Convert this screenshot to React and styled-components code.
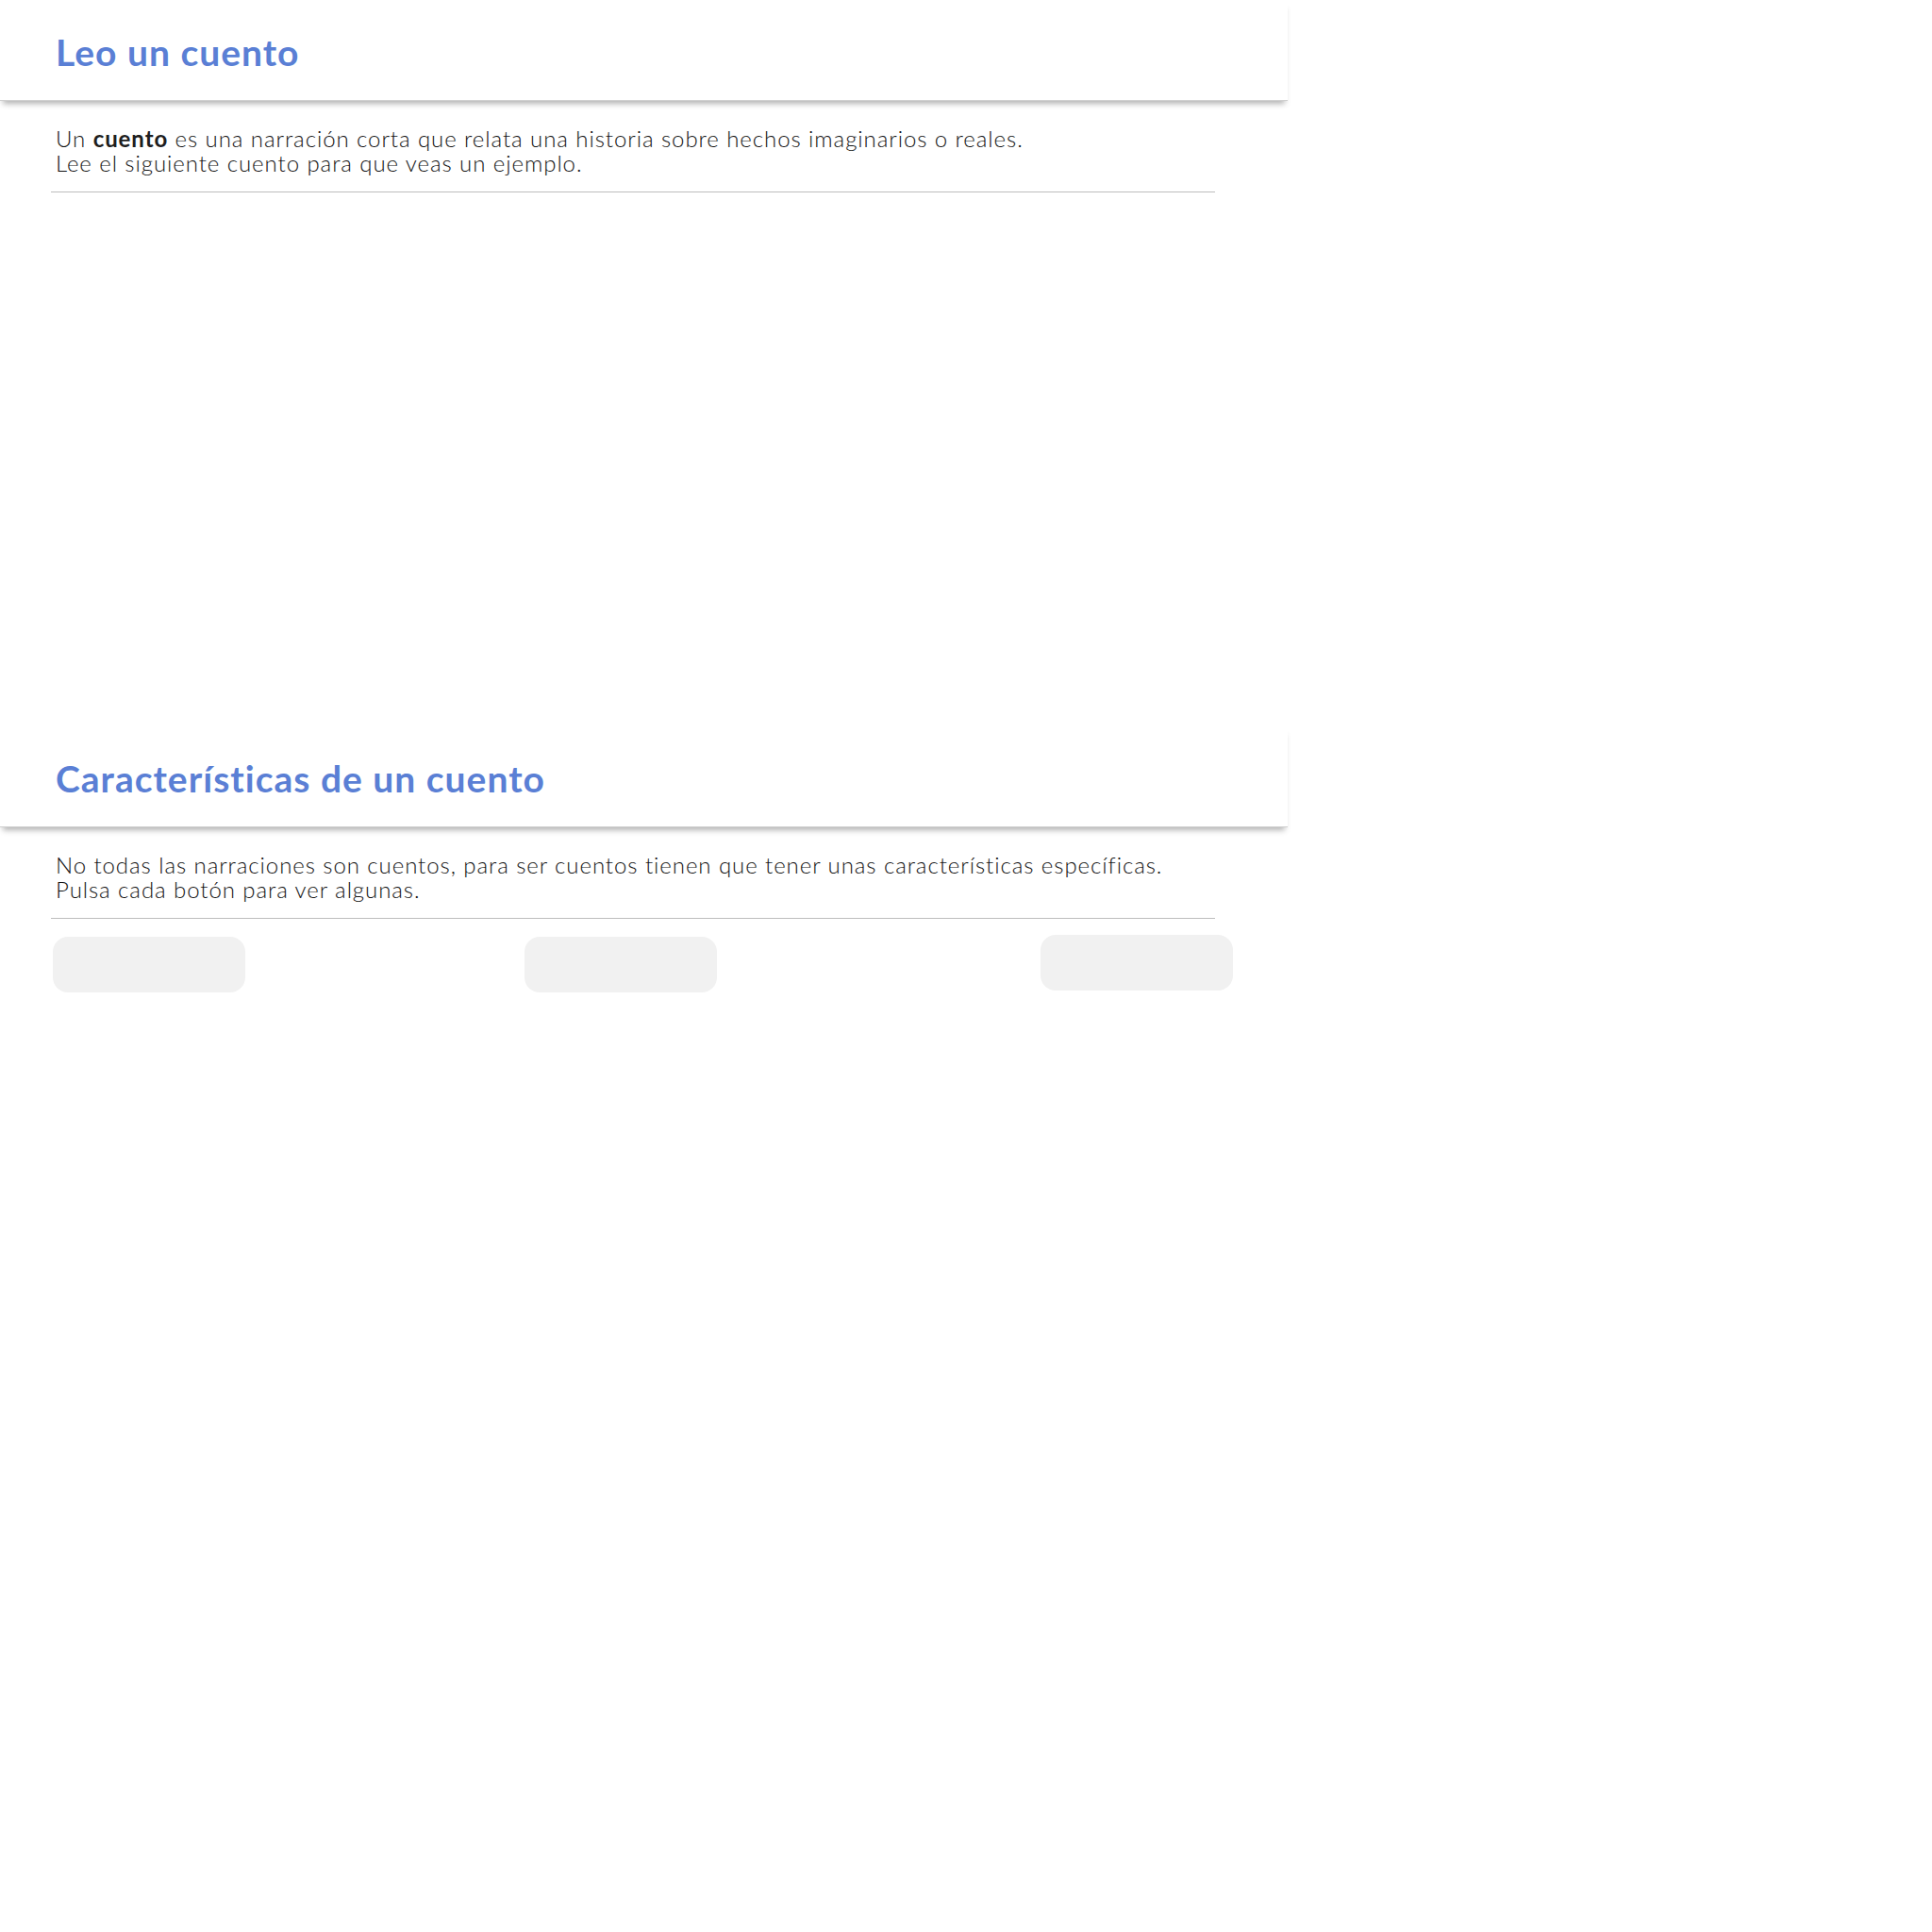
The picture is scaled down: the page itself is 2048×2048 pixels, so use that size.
import React from 'react'
import styled, { createGlobalStyle } from 'styled-components'

const GlobalStyle = createGlobalStyle`
    html, body {
        margin: 0;
        padding: 0;
        background: #ffffff;
    }

    body {
        font-family: Lato, "Open Sans", sans-serif;
        color: #333333;
    }
`;

export default function App() {
    return (
        <Page>
            <GlobalStyle />
            <Section>
                <Header>
                    <Title>Leo un cuento</Title>
                </Header>
                <Intro>
                    <p>Un <b>cuento</b> es una narración corta que relata una historia sobre hechos imaginarios o reales.</p>
                    <p>Lee el siguiente cuento para que veas un ejemplo.</p>
                </Intro>
                <Divider />
                <StoryFrame />
            </Section>

            <Section>
                <Header>
                    <Title>Características de un cuento</Title>
                </Header>
                <Intro>
                    <p>No todas las narraciones son cuentos, para ser cuentos tienen que tener unas características específicas.</p>
                    <p>Pulsa cada botón para ver algunas.</p>
                </Intro>
                <Divider />
                <ButtonRow>
                    <RevealButton aria-label="Característica 1" />
                    <RevealButton aria-label="Característica 2" />
                    <RevealButton aria-label="Característica 3" $raised />
                </ButtonRow>
            </Section>
        </Page>
    )
}

const Page = styled.div`
    width: 2048px;
    min-height: 2048px;
    background: #ffffff;
`;

const Section = styled.section`
    display: flex;
    flex-direction: column;
`;

const Header = styled.header`
    width: 1365px;
    height: 107px;
    box-sizing: border-box;
    display: flex;
    align-items: flex-start;
    padding: 25px 0 0 59px;
    background: #ffffff;
    border-bottom: 1px solid #cfcfcf;
    box-shadow: 0 6px 6px -3px rgba(0, 0, 0, 0.3);
    position: relative;
    z-index: 1;
`;

const Title = styled.h1`
    margin: 0;
    font-family: Lato, "Open Sans", sans-serif;
    font-weight: 700;
    font-size: 39px;
    line-height: 60px;
    color: #5a7fd5;
    letter-spacing: 1px;
`;

const Intro = styled.div`
    padding: 27px 0 0 59px;
    font-size: 24px;
    font-weight: 300;
    line-height: 26px;
    letter-spacing: 0.93px;
    color: #141414;

    p {
        margin: 0;
    }

    b {
        font-weight: 700;
        color: #1e1e1e;
    }
`;

const Divider = styled.hr`
    width: 1234px;
    margin: 17px 0 0 54px;
    border: 0;
    border-top: 1px solid #bdbdbd;
    height: 0;
`;

const StoryFrame = styled.div`
    height: 566px;
`;

const ButtonRow = styled.div`
    display: grid;
    grid-template-columns: 500px 547px 204px;
    align-items: start;
    padding: 19px 0 0 56px;
`;

const RevealButton = styled.button`
    width: 204px;
    height: 59px;
    border: 0;
    border-radius: 16px;
    background: #f1f1f1;
    cursor: pointer;
    margin-top: ${({ $raised }) => ($raised ? '-2px' : '0')};
`;
